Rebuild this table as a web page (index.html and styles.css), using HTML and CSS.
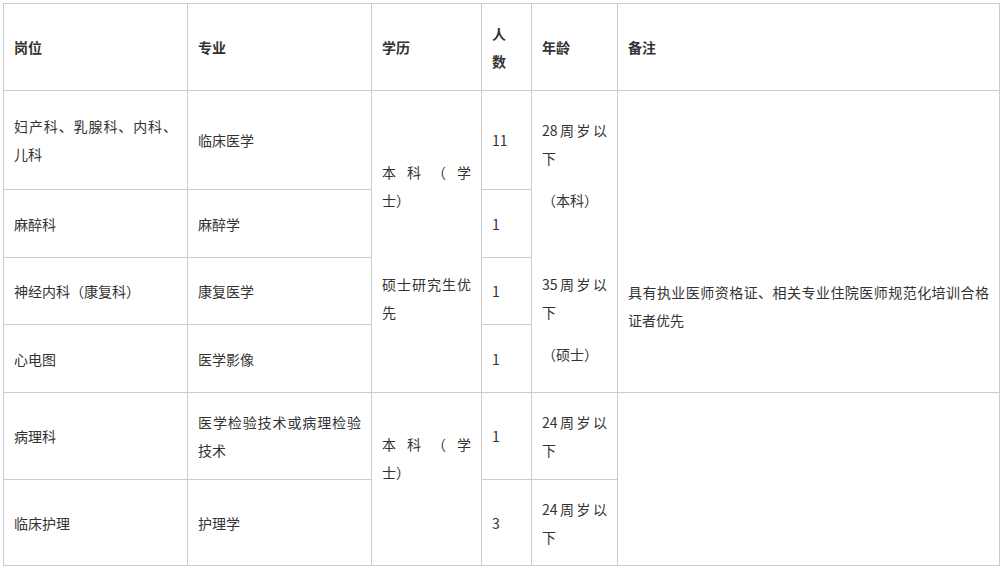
FILE: index.html
```html
<!DOCTYPE html>
<html lang="zh-CN">
<head>
<meta charset="utf-8">
<title>招聘岗位</title>
<link rel="stylesheet" href="styles.css">
</head>
<body>
<div class="table">
  <div class="cell head"><p>岗位</p></div>
  <div class="cell head"><p>专业</p></div>
  <div class="cell head"><p>学历</p></div>
  <div class="cell head narrow"><p>人数</p></div>
  <div class="cell head"><p>年龄</p></div>
  <div class="cell head"><p>备注</p></div>

  <div class="cell"><p>妇产科、乳腺科、内科、儿科</p></div>
  <div class="cell"><p>临床医学</p></div>
  <div class="cell span4">
    <p><span class="jline">本科（学</span>士）</p>
    <p class="blank"></p>
    <p>硕士研究生优先</p>
  </div>
  <div class="cell narrow"><p>11</p></div>
  <div class="cell span4">
    <p>28周岁以下</p>
    <p>（本科）</p>
    <p class="blank"></p>
    <p>35周岁以下</p>
    <p>（硕士）</p>
  </div>
  <div class="cell span4 remark"><p>具有执业医师资格证、相关专业住院医师规范化培训合格证者优先</p></div>

  <div class="cell"><p>麻醉科</p></div>
  <div class="cell"><p>麻醉学</p></div>
  <div class="cell narrow"><p>1</p></div>

  <div class="cell"><p>神经内科（康复科）</p></div>
  <div class="cell"><p>康复医学</p></div>
  <div class="cell narrow"><p>1</p></div>

  <div class="cell"><p>心电图</p></div>
  <div class="cell"><p>医学影像</p></div>
  <div class="cell narrow"><p>1</p></div>

  <div class="cell"><p>病理科</p></div>
  <div class="cell"><p>医学检验技术或病理检验技术</p></div>
  <div class="cell span2">
    <p><span class="jline">本科（学</span>士）</p>
    <p class="blank"></p>
  </div>
  <div class="cell narrow"><p>1</p></div>
  <div class="cell"><p>24周岁以下</p></div>
  <div class="cell span2"></div>

  <div class="cell"><p>临床护理</p></div>
  <div class="cell"><p>护理学</p></div>
  <div class="cell narrow"><p>3</p></div>
  <div class="cell"><p>24周岁以下</p></div>
</div>
</body>
</html>
```

FILE: styles.css
```css
html, body {
  margin: 0;
  background: #fff;
}

body {
  font-family: "Noto Sans CJK SC", sans-serif;
  font-size: 14px;
  color: #333;
}

.table {
  display: grid;
  grid-template-columns: 183px 183px 109px 49px 85px 381px;
  grid-template-rows: 86px 98px 67px 66px 67px 86px 85px;
  gap: 1px;
  padding: 1px;
  background: #ccc;
  width: max-content;
  margin: 3px;
}

.cell {
  background: #fff;
  padding: 0 10px;
  display: flex;
  flex-direction: column;
  justify-content: center;
  line-height: 28px;
  text-align: justify;
}

.cell p {
  margin: 0;
}

.cell p + p {
  margin-top: 14px;
}

.blank {
  height: 28px;
}

.head {
  font-weight: bold;
}

.narrow {
  padding-right: 12px;
}

.jline {
  display: block;
  text-align-last: justify;
}

.span4 {
  grid-row: span 4;
}

.span2 {
  grid-row: span 2;
}

.remark {
  justify-content: flex-start;
  padding-top: 187px;
}
```
